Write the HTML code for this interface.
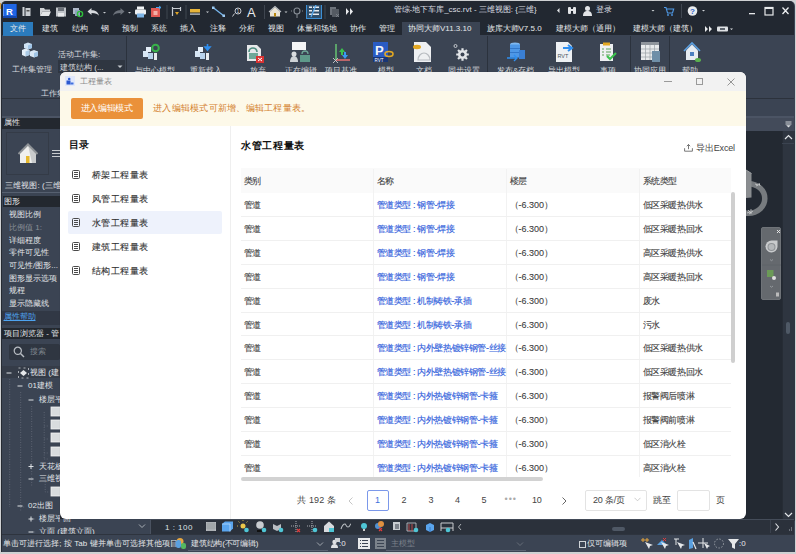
<!DOCTYPE html>
<html><head><meta charset="utf-8">
<style>
*{margin:0;padding:0;box-sizing:border-box}
html,body{width:796px;height:554px;overflow:hidden;background:#d9d9d9;font-family:"Liberation Sans",sans-serif}
.a{position:absolute}
.t{position:absolute;white-space:nowrap;line-height:1}
#win{position:absolute;left:2px;top:1px;width:792px;height:553px;background:#3b4453;border-radius:5px 5px 0 0;overflow:hidden}
.tab{position:absolute;top:22.3px;height:14px;color:#e6e8ea;font-size:8px;line-height:14px;white-space:nowrap}
.rl{position:absolute;top:65.5px;color:#d7dade;font-size:8px;line-height:9px;white-space:nowrap}
.div{position:absolute;width:1px;background:#2b323d}
/* dialog */
#dlg{position:absolute;left:60px;top:72px;width:686px;height:447px;background:#fff;border-radius:6px;overflow:hidden;box-shadow:0 0 1px rgba(0,0,0,.2)}
.tt{position:absolute;white-space:nowrap;line-height:1;font-size:9px;letter-spacing:-0.4px;color:#3f3f3f;-webkit-text-stroke:0.1px currentColor}
.th{color:#3f3f3f}
.bl{color:#3563dc;-webkit-text-stroke:0.15px #3563dc}
.lt{position:absolute;left:31.5px;white-space:nowrap;line-height:1;font-size:9px;letter-spacing:0.55px;color:#333;-webkit-text-stroke:0.12px #333}
.lico{position:absolute;left:12px;width:8px;height:9px;border:1px solid #555;border-radius:1px}
.lico i{position:absolute;left:1.5px;top:1.5px;width:3px;height:4px;border-top:1px solid #555;border-bottom:1px solid #555}
.lico i:after{content:"";position:absolute;left:0;top:1.5px;width:3px;height:1px;background:#555}
.pg{position:absolute;white-space:nowrap;line-height:1;font-size:9px;letter-spacing:-0.2px}
.pr{left:9px;color:#e2e5e8;font-size:8px}
.br{color:#e2e5e8;font-size:8px}
</style></head>
<body>
<!-- window frame -->
<div class="a" style="left:0;top:0;width:796px;height:554px;background:#cfd1d3"></div>
<div class="a" style="left:0;top:3px;width:1px;height:6px;background:#d9a040"></div>
<div class="a" style="left:1px;top:1px;width:793.5px;height:551px;background:#3b4453;border-radius:5px 5px 0 0;border-left:1px solid #262b33"></div>
<div class="a" style="left:1.5px;top:1px;width:792.5px;height:34px;background:#222831;border-radius:5px 5px 0 0"></div>

<!-- QAT -->
<div class="a" style="left:3px;top:4px;width:14px;height:14px;background:#1f66e5;box-shadow:inset -1px -2px 0 #1448b0, inset 1px 0 0 #5b93f0"></div>
<div class="t" style="left:6px;top:6.5px;color:#fff;font-size:9.5px;font-weight:bold">R</div>
<svg class="a" style="left:20px;top:5px" width="340" height="14" viewBox="0 0 340 14">
  <!-- doc icon -->
  <rect x="2.5" y="2" width="2" height="9" fill="#cfd3d8"/><rect x="5.5" y="3" width="5" height="8" fill="#c8ccd1"/><rect x="6.5" y="5" width="3" height="1.5" fill="#555"/>
  <!-- folder -->
  <path d="M20 3h4l1 1.5h5v2H22.5L20 11z" fill="#cfd2d5"/><path d="M22.5 6.5H31L29 11H20z" fill="#e3e5e7"/>
  <!-- save -->
  <rect x="36" y="2.5" width="10" height="9" fill="#bfc3c8"/><rect x="38" y="3" width="6" height="3" fill="#6b7179"/><rect x="38" y="8" width="6" height="3.5" fill="#e9ebed"/>
  <!-- sync -->
  <rect x="53" y="3" width="6" height="6" fill="#aeb8c8"/><rect x="55" y="5" width="5" height="6" fill="#8fa2bd"/><circle cx="60" cy="9" r="2.6" fill="none" stroke="#2fbf3a" stroke-width="1.4"/>
  <!-- undo -->
  <path d="M67.5 6.5l4-3.5v2.2c4 0 6.5 1.5 7.5 5.5c-1.5-2-3.5-2.8-7.5-2.8v2.2z" fill="#d8dbdf"/>
  <path d="M83 7l1.5 1.6L86 7z" fill="#c9cdd2"/>
  <!-- redo -->
  <path d="M104.5 6.5l-4-3.5v2.2c-4 0-6.5 1.5-7.5 5.5c1.5-2 3.5-2.8 7.5-2.8v2.2z" fill="#6c727b"/>
  <path d="M108 7l1.5 1.6L111 7z" fill="#c9cdd2"/>
  <!-- printer -->
  <rect x="117" y="1.5" width="7" height="3" fill="#f2f4f6"/><rect x="115" y="4.5" width="11" height="5" rx="1" fill="#eceff2"/><rect x="117" y="8.5" width="7" height="4" fill="#7db4e6"/>
  <!-- red -->
  <rect x="131" y="3" width="9" height="9" fill="#e25a54"/><rect x="133.5" y="6" width="4" height="4" fill="#f3b0a8"/><path d="M136 2.5h4.5M139 1l2 1.5-2 1.5" stroke="#4aa6ee" stroke-width="1" fill="none"/>
  <rect x="146.5" y="0" width="1" height="14" fill="#3f4650"/>
  <!-- measure -->
  <path d="M152.5 2v9M152.5 3.5h8M160.5 2v4" stroke="#c7cbd0" stroke-width="1.2" fill="none"/><path d="M155 7h4l-2 3z" fill="#e0a526"/>
  <rect x="165.5" y="0" width="1" height="14" fill="#3f4650"/>
  <!-- yellow ruler -->
  <rect x="170" y="4" width="10" height="3.5" fill="#e6b43a"/><rect x="170" y="8.5" width="10" height="1.2" fill="#cfd3d8"/>
  <path d="M186 6.5l1.5 1.6L189 6.5z" fill="#c9cdd2"/>
  <!-- diag -->
  <path d="M193 2.5L204 11" stroke="#78b7ee" stroke-width="1.3"/><rect x="192" y="1.5" width="2.5" height="2.5" fill="#9cc9f2"/><rect x="202.5" y="9.5" width="2.5" height="2.5" fill="#9cc9f2"/>
  <!-- tag -->
  <circle cx="218" cy="6" r="3" fill="none" stroke="#c8ccd1" stroke-width="1"/><path d="M214.5 8.5l-2 3" stroke="#c8ccd1" stroke-width="1"/><text x="216.6" y="8" font-size="5" fill="#c8ccd1" font-family="Liberation Sans">1</text>
  <text x="227" y="12" font-size="13" fill="#e8eaec" font-family="Liberation Sans">A</text>
  <rect x="244" y="0" width="1" height="14" fill="#3f4650"/>
  <!-- house -->
  <path d="M250 6.5l5-4.5 5 4.5v5h-10z" fill="#e9e3d4"/><path d="M249 7l6-5.5 6 5.5" stroke="#b9bdc2" stroke-width="1.2" fill="none"/><rect x="254" y="8" width="2" height="3.5" fill="#b8860b"/>
  <path d="M264.5 6.5l1.5 1.6L267.5 6.5z" fill="#c9cdd2"/>
  <!-- pin -->
  <circle cx="277" cy="6" r="3" fill="none" stroke="#878d95" stroke-width="1.1"/><path d="M277 9v4M272 6h-1M283 6h-1" stroke="#878d95" stroke-width="1"/>
  <!-- highlighted -->
  <rect x="286.5" y="-1.5" width="15" height="15" fill="#2f4f6c" stroke="#3d8fd4" stroke-width="1"/>
  <rect x="289" y="1.5" width="3" height="1.5" fill="#e9ecef"/><rect x="293" y="1.5" width="6" height="1.5" fill="#e9ecef"/><rect x="289" y="5" width="3" height="1.5" fill="#e9ecef"/><rect x="293" y="5" width="6" height="1.5" fill="#e9ecef"/><rect x="289" y="8.5" width="3" height="1.5" fill="#e9ecef"/><rect x="293" y="8.5" width="6" height="1.5" fill="#e9ecef"/><path d="M296 0L291 12" stroke="#5aaef5" stroke-width="1.2"/>
  <rect x="304.5" y="0" width="1" height="14" fill="#3f4650"/>
  <!-- grey icon -->
  <rect x="310" y="2" width="6" height="8" fill="#6d737b"/><rect x="312" y="4" width="7" height="8" fill="#555b63"/><path d="M316 9l3 3M319 9l-3 3" stroke="#80868e" stroke-width="0.8"/>
  <path d="M326 3l3 3.5-3 3.5zM330 3l3 3.5-3 3.5z" fill="#e8eaec"/>
</svg>
<div class="t" style="left:393.5px;top:6px;color:#dcdfe3;font-size:8px;letter-spacing:0px">管综-地下车库_csc.rvt - 三维视图: {三维}</div>
<svg class="a" style="left:556px;top:4px" width="240" height="14" viewBox="0 0 240 14">
  <path d="M3.5 4l-2.5 2.5 2.5 2.5z" fill="#e2e4e7"/>
  <rect x="12" y="3" width="3" height="7" rx="1" fill="#e2e4e7"/><rect x="17" y="3" width="3" height="7" rx="1" fill="#e2e4e7"/><rect x="14" y="5" width="4" height="2" fill="#e2e4e7"/>
  <circle cx="31.5" cy="4.5" r="2.5" fill="#e2e4e7"/><path d="M27 12c0-4 2-5 4.5-5s4.5 1 4.5 5z" fill="#e2e4e7"/>
  <path d="M95.5 6l1.5 1.6L98.5 6z" fill="#d0d3d7"/>
  <path d="M108 3.5h2l1.5 5.5h5l1.2-4h-7" stroke="#4f9ae8" stroke-width="1.1" fill="none"/><circle cx="112" cy="11" r="0.9" fill="#4f9ae8"/><circle cx="116" cy="11" r="0.9" fill="#4f9ae8"/>
  <rect x="125" y="0" width="1" height="14" fill="#3f4650"/>
  <circle cx="136.5" cy="7" r="4.8" fill="#e8eaed"/><text x="134" y="10" font-size="8" font-weight="bold" fill="#2d63c8" font-family="Liberation Sans">?</text>
  <path d="M146 6l1.5 1.6L149 6z" fill="#d0d3d7"/>
  <rect x="193" y="9" width="6" height="1.3" fill="#e6e8ea"/>
  <rect x="209" y="3.5" width="8" height="7.5" fill="none" stroke="#e6e8ea" stroke-width="1.2"/><rect x="209" y="3.5" width="8" height="1.5" fill="#e6e8ea"/>
  <path d="M226.5 3.5l6 6.5M232.5 3.5l-6 6.5" stroke="#eef0f2" stroke-width="1.3"/>
</svg>
<div class="t" style="left:596px;top:6px;color:#dcdfe3;font-size:8px">登录</div>

<!-- tabs -->
<div class="a" style="left:3px;top:21.5px;width:30px;height:14px;background:#2b7bbd"></div>
<div class="tab" style="left:10px">文件</div>
<div class="tab" style="left:41.5px">建筑</div>
<div class="tab" style="left:71.5px">结构</div>
<div class="tab" style="left:100.5px">钢</div>
<div class="tab" style="left:122px">预制</div>
<div class="tab" style="left:151px">系统</div>
<div class="tab" style="left:180px">插入</div>
<div class="tab" style="left:209.5px">注释</div>
<div class="tab" style="left:238.5px">分析</div>
<div class="tab" style="left:267.5px">视图</div>
<div class="tab" style="left:297px">体量和场地</div>
<div class="tab" style="left:350px">协作</div>
<div class="tab" style="left:379px">管理</div>
<div class="a" style="left:402px;top:21.5px;width:78px;height:14px;background:#3b4453"></div>
<div class="tab" style="left:408px">协同大师V11.3.10</div>
<div class="tab" style="left:486.5px">族库大师V7.5.0</div>
<div class="tab" style="left:555.5px">建模大师（通用）</div>
<div class="tab" style="left:633px">建模大师（建筑）</div>
<svg class="a" style="left:703px;top:24px" width="32" height="10" viewBox="0 0 32 10">
  <path d="M2 2l3 3-3 3zM6 2l3 3-3 3z" fill="#e8eaec"/><rect x="14" y="2.5" width="11" height="5" rx="1" fill="#dfe2e5"/><rect x="17" y="4" width="5" height="2" fill="#5c636c"/><path d="M27 4.5l1.5 1.5 1.5-1.5z" fill="#dfe2e5"/>
</svg>

<!-- ribbon -->
<svg class="a" style="left:22px;top:42px" width="18" height="17" viewBox="0 0 18 17">
  <path d="M6 0.5l4 1.5v4l-4 1.5-4-1.5v-4z" fill="#cfe3f5"/><path d="M6 3.5l4-1.5v4l-4 1.5z" fill="#9fc4e6"/>
  <path d="M3.5 6.5l4 1.5v5l-4 1.5-3.5-1.5v-5z" fill="#e3eef8"/><path d="M3.5 9.5l4-1.5v5l-4 1.5z" fill="#a9c9e6"/>
  <path d="M12 8l4 1.5v4.5l-4 1.5-4-1.5v-4.5z" fill="#d8e7f5"/><path d="M12 11l4-1.5v4.5l-4 1.5z" fill="#9fc4e6"/>
</svg>
<div class="rl" style="left:12px;top:65px">工作集管理</div>
<div class="rl" style="left:58px;top:50px">活动工作集:</div>
<div class="a" style="left:58px;top:60px;width:67px;height:13px;background:#2f3641"></div>
<div class="rl" style="left:60px;top:62.5px">建筑结构 (...</div>
<svg class="a" style="left:117px;top:65px" width="6" height="4"><path d="M0.5 0.5l2.5 2.5 2.5-2.5z" fill="#c4c8cd"/></svg>
<div class="rl" style="left:41px;top:88.5px">工作集</div>
<div class="div" style="left:126px;top:36px;height:62px"></div>
<div class="div" style="left:487px;top:36px;height:62px"></div>
<div class="div" style="left:629.5px;top:36px;height:62px"></div>
<div class="div" style="left:669px;top:36px;height:62px"></div>
<svg class="a" style="left:130px;top:39.5px" width="575" height="34" viewBox="0 0 575 34">
  <!-- 与中心模型 143-162 -->
  <g transform="translate(13,4)"><rect x="0" y="7" width="5" height="6" fill="#d7e6f4"/><rect x="5" y="9" width="5" height="6" fill="#b9d3ec"/><rect x="3" y="3" width="5" height="5" fill="#e4eef8"/><rect x="11" y="9" width="3" height="7" fill="#e8ecef"/><circle cx="12.5" cy="4" r="3.3" fill="none" stroke="#38b24a" stroke-width="2"/></g>
  <!-- 重新载入 195-213 -->
  <g transform="translate(65,4)"><rect x="0" y="7" width="5" height="6" fill="#d7e6f4"/><rect x="5" y="9" width="5" height="6" fill="#b9d3ec"/><rect x="3" y="3" width="5" height="5" fill="#e4eef8"/><rect x="11" y="9" width="3" height="7" fill="#e8ecef"/><path d="M12.5 0v5M10 3l2.5 3 2.5-3z" stroke="#2f8ff0" stroke-width="1.6" fill="#2f8ff0"/></g>
  <!-- 放弃 245-265 -->
  <g transform="translate(115,4)"><path d="M2 1h10l4 4v12H2z" fill="#e6e8ea"/><path d="M4 8a4 4 0 0 1 8 0" stroke="#4f8f80" stroke-width="1.6" fill="none"/><rect x="4" y="9" width="9" height="6" fill="#6fa898"/><rect x="11" y="12" width="8" height="7" fill="#d93232"/><path d="M13 14l4 3M17 14l-4 3" stroke="#fff" stroke-width="1"/></g>
  <!-- 正在编辑 288-310 -->
  <g transform="translate(158,2)"><rect x="4" y="0" width="14" height="8" fill="#f4f5f6"/><circle cx="6" cy="12" r="2.5" fill="#d9dcdf"/><path d="M2 20c0-4 2-6 4-6s4 2 4 6z" fill="#cfd3d7"/><path d="M14 12a3 3 0 0 1 6 0" stroke="#6fa898" stroke-width="1.3" fill="none"/><rect x="12" y="13" width="10" height="7" fill="#5e9a8a"/></g>
  <!-- 项目基准 332-352 -->
  <g transform="translate(202,2)"><path d="M4 2v16M4 18h14" stroke="#d9dcdf" stroke-width="1"/><path d="M4 2v16" stroke="#3cb14a" stroke-width="1.2"/><path d="M4 18h14" stroke="#e04848" stroke-width="1.2"/><path d="M7 10l3-4 3 4h-2v3h-2v-3z" fill="#3cc24e"/><path d="M12 10h2v3h2l-3 4-3-4h2z" fill="#3a9af0"/><path d="M1 16l5 5M6 16l-5 5" stroke="#c9ccd0" stroke-width="0.9"/></g>
  <!-- 模型 373-392 -->
  <g transform="translate(243,2)"><rect x="0" y="0" width="15" height="20" fill="#2a5cc4"/><rect x="0" y="15" width="15" height="5" fill="#183676"/><text x="2" y="13" font-size="13" font-weight="bold" fill="#f2f5fa" font-family="Liberation Sans">P</text><text x="1.5" y="19.5" font-size="4.5" fill="#fff" font-family="Liberation Sans">RVT</text><ellipse cx="16" cy="12" rx="4" ry="2.5" fill="none" stroke="#e3a823" stroke-width="1.6"/></g>
  <!-- 文档 412-432 -->
  <g transform="translate(282,2)"><path d="M2 0h12l5 5v15H2z" fill="#eef0f2"/><ellipse cx="5" cy="5" rx="4" ry="2.2" fill="#e3a823"/><path d="M6 18c0-4 3-7 6-7s6 3 6 7z" fill="none" stroke="#b8bcc1" stroke-width="1.2"/></g>
  <!-- 同步设置 455-468 -->
  <g transform="translate(323,4)"><circle cx="2.5" cy="2" r="1.5" fill="none" stroke="#cfd3d7" stroke-width="0.9"/><path d="M13.70 10.50L15.80 10.50M12.47 13.47L13.95 14.95M9.50 14.70L9.50 16.80M6.53 13.47L5.05 14.95M5.30 10.50L3.20 10.50M6.53 7.53L5.05 6.05M9.50 6.30L9.50 4.20M12.47 7.53L13.95 6.05" stroke="#e3e6e9" stroke-width="2.2"/><circle cx="9.5" cy="10.5" r="4.6" fill="#e3e6e9"/><circle cx="9.5" cy="10.5" r="2" fill="#3b4453"/></g>
  <!-- 发布&存档 507-525 -->
  <g transform="translate(377,2)"><ellipse cx="8" cy="2.5" rx="5" ry="2" fill="#7fb8f0"/><rect x="3" y="2.5" width="10" height="13" fill="#4e97e6"/><path d="M3 6.5h10M3 10.5h10" stroke="#2b6fc2" stroke-width="0.8"/><rect x="12" y="8" width="6" height="9" fill="#3a7fd4"/><path d="M0 16h10M7 13l3 3-3 3" stroke="#2f8ff0" stroke-width="1.4" fill="none"/></g>
  <!-- 导出模型 555-575 -->
  <g transform="translate(425,2)"><path d="M1 0h12l4 4v16H1z" fill="#eef1f4"/><text x="2.5" y="16" font-size="5.5" fill="#4a5563" font-family="Liberation Sans">RVT</text><path d="M8 6h8M13 3l4 3-4 3" stroke="#2f8ff0" stroke-width="2" fill="none"/></g>
  <!-- 事项 600-616 -->
  <g transform="translate(470,2)"><rect x="0" y="2" width="13" height="17" fill="#eef0f2"/><rect x="3" y="0.5" width="7" height="3" fill="#e3a823"/><path d="M2 7h2M6 7h5M2 10h2M6 10h5M2 13h2M6 13h4" stroke="#5fa05a" stroke-width="1"/><path d="M7 14l3 3 6-6" stroke="#3cc24e" stroke-width="2.2" fill="none"/></g>
  <!-- 协同应用 641-660 -->
  <g transform="translate(511,2)"><rect x="0" y="0" width="18" height="18" fill="#e8eaec"/><rect x="0" y="0" width="18" height="3" fill="#8f959c"/><path d="M0 7h18M0 11h18M0 15h18M4.5 3v15M9 3v15M13.5 3v15" stroke="#9aa0a6" stroke-width="0.7"/><rect x="11" y="9" width="8" height="11" fill="#6f8fa8"/></g>
  <!-- 帮助 683-700 -->
  <g transform="translate(553,2)"><path d="M1 9l8-8 8 8" stroke="#5a9fe0" stroke-width="1.6" fill="none"/><path d="M3 8.5l6-6 6 6V18H3z" fill="#e6ecf2"/><rect x="7" y="10" width="4" height="4" fill="#4a7fc0"/><ellipse cx="15" cy="18" rx="3" ry="2" fill="#5bb04e"/></g>
</svg>
<div class="rl" style="left:135px">与中心模型</div>
<div class="rl" style="left:190px">重新载入</div>
<div class="rl" style="left:249.5px">放弃</div>
<div class="rl" style="left:285px">正在编辑</div>
<div class="rl" style="left:325px">项目基准</div>
<div class="rl" style="left:377.5px">模型</div>
<div class="rl" style="left:416px">文档</div>
<div class="rl" style="left:448px">同步设置</div>
<div class="rl" style="left:497px">发布&amp;存档</div>
<div class="rl" style="left:548px">导出模型</div>
<div class="rl" style="left:600px">事项</div>
<div class="rl" style="left:634px">协同应用</div>
<div class="rl" style="left:682px">帮助</div>
<div class="a" style="left:1.5px;top:97.5px;width:792.5px;height:1px;background:#2c323c"></div>

<!-- options bar -->
<div class="a" style="left:1.5px;top:115.5px;width:792.5px;height:2px;background:#4b5464"></div>

<!-- properties panel -->
<div class="a" style="left:1.5px;top:117.5px;width:58.5px;height:11px;background:#23282f"></div>
<div class="t" style="left:4px;top:119px;color:#e2e5e8;font-size:8px">属性</div>
<div class="a" style="left:5.5px;top:131.5px;width:43.5px;height:43px;border:1px solid #343b47;background:#3b4453"></div>
<svg class="a" style="left:18px;top:142.5px" width="20" height="22" viewBox="0 0 20 22">
  <path d="M2 10L10 2l8 8v10H2z" fill="#f0f0ee"/><path d="M10 2l8 8v10h-4z" fill="#c9cbcc"/><path d="M0.5 11L10 1.5 19.5 11" stroke="#8f9397" stroke-width="2" fill="none"/><rect x="8" y="13" width="3.5" height="7" fill="#e6b82e"/>
</svg>
<div class="a" style="left:52px;top:150px;width:8px;height:1px;background:#c8ccd0"></div>
<div class="a" style="left:52px;top:153px;width:8px;height:1px;background:#c8ccd0"></div>
<div class="a" style="left:52px;top:156px;width:8px;height:1px;background:#c8ccd0"></div>
<div class="t" style="left:5px;top:181.5px;color:#e2e5e8;font-size:8px;letter-spacing:0.1px">三维视图: (三维</div>
<div class="a" style="left:2px;top:191.5px;width:58px;height:1.5px;background:#566070"></div>
<div class="a" style="left:3px;top:196px;width:57px;height:11px;background:#23282f"></div>
<div class="t" style="left:4px;top:197.5px;color:#e2e5e8;font-size:8px">图形</div>
<div class="t pr" style="top:211px">视图比例</div>
<div class="t pr" style="top:223.5px;color:#8a9098">比例值 1:</div>
<div class="t pr" style="top:236.5px">详细程度</div>
<div class="t pr" style="top:249px">零件可见性</div>
<div class="t pr" style="top:261.5px">可见性/图形...</div>
<div class="t pr" style="top:274.5px">图形显示选项</div>
<div class="t pr" style="top:287px">规程</div>
<div class="t pr" style="top:299.5px">显示隐藏线</div>
<div class="a" style="left:2px;top:311px;width:58px;height:14px;background:#313845"></div>
<div class="t" style="left:3.5px;top:313px;color:#4ea3ef;font-size:8px;text-decoration:underline">属性帮助</div>

<!-- project browser -->
<div class="a" style="left:2px;top:328px;width:58px;height:11.3px;background:#23282f"></div>
<div class="t" style="left:4px;top:329.5px;color:#e2e5e8;font-size:8px">项目浏览器 - 管</div>
<div class="a" style="left:9px;top:344px;width:51px;height:15.5px;background:#2f3641;border-radius:2px"></div>
<svg class="a" style="left:13px;top:346px" width="12" height="12" viewBox="0 0 12 12"><circle cx="4.8" cy="4.8" r="3.6" fill="none" stroke="#b9bec4" stroke-width="1.2"/><path d="M7.5 7.5L11 11" stroke="#b9bec4" stroke-width="1.4"/></svg>
<div class="t" style="left:30px;top:347.5px;color:#7d848c;font-size:8px">搜索</div>
<div class="a" style="left:1.5px;top:366px;width:58.5px;height:12px;background:#353c48"></div>
<svg class="a" style="left:1.5px;top:366.5px" width="150" height="170" viewBox="0 0 150 170">
  <g stroke="#646c79" stroke-width="0.8" stroke-dasharray="1,1.5" fill="none" transform="translate(-1.8,0)">
    <path d="M9.5 12v128M20.5 25v120M31.5 39v70M31.5 110v10M44 45v46M44 92h5M44 59h5M44 72h5M44 86h5M45 112v13h4M20.5 140h5M31.5 152h5M31.5 165h5"/>
  </g>
  <path d="M4.5 6h5M15.5 19h5M26.5 33h5M26.5 112h5M15.5 139h5M26.5 165h5" stroke="#dfe2e6" stroke-width="1"/>
  <path d="M29 97v5M26.5 99.5h5M29 149.5v5M26.5 152h5" stroke="#dfe2e6" stroke-width="1"/>
  <rect x="16.5" y="1" width="10" height="10" fill="none" stroke="#c9cdd2" stroke-width="0.8" stroke-dasharray="2,3"/><path d="M18 6l3.5-3 3.5 3-3.5 3z" fill="#e6e8ea"/>
  <rect x="49" y="40" width="10" height="9" fill="#d9dcde" stroke="#f4f4f4" stroke-width="0.8"/>
  <rect x="49" y="53" width="10" height="9" fill="#d9dcde" stroke="#f4f4f4" stroke-width="0.8"/>
  <rect x="49" y="66" width="10" height="9" fill="#d9dcde" stroke="#f4f4f4" stroke-width="0.8"/>
  <rect x="49" y="80" width="10" height="9" fill="#d9dcde" stroke="#f4f4f4" stroke-width="0.8"/>
  <rect x="49" y="120" width="10" height="9" fill="#d9dcde" stroke="#f4f4f4" stroke-width="0.8"/>
</svg>
<div class="t br" style="left:30px;top:369px">视图 (建</div>
<div class="t br" style="left:28px;top:382px">01建模</div>
<div class="t br" style="left:39px;top:396px">楼层平</div>
<div class="t br" style="left:39px;top:462.5px">天花板</div>
<div class="t br" style="left:39px;top:474.5px">三维视</div>
<div class="t br" style="left:28px;top:502px">02出图</div>
<div class="t br" style="left:39px;top:515px">楼层平面</div>
<div class="t br" style="left:39px;top:527.5px">立面 (建筑立面)</div>
<div class="a" style="left:137px;top:519px;width:11px;height:15px;background:#3b4453"></div>
<svg class="a" style="left:138px;top:523px" width="8" height="6"><path d="M1 1.5l3 3 3-3" stroke="#aab0b7" stroke-width="1" fill="none"/></svg>

<!-- view area -->
<div class="a" style="left:60px;top:117.5px;width:734px;height:13.5px;background:#434b5a"></div>
<svg class="a" style="left:785px;top:121px" width="7" height="7" viewBox="0 0 7 7"><path d="M0.5 1h6M0.5 3h6" stroke="#dfe2e5" stroke-width="0.9"/><path d="M1.2 4.3h4.6L3.5 6.5z" fill="#dfe2e5"/></svg>
<div class="a" style="left:60px;top:131px;width:722px;height:388px;background:#232932"></div>
<div class="a" style="left:781.5px;top:131px;width:13px;height:390px;background:#2e3540;border-left:1px solid #262c35"></div>
<svg class="a" style="left:784px;top:134px" width="9" height="7"><path d="M1 5l3.5-3.5L8 5" stroke="#e3e6e9" stroke-width="1.2" fill="none"/></svg>
<div class="a" style="left:782px;top:142.5px;width:12px;height:1px;background:#3b4350"></div>
<div class="a" style="left:785.8px;top:321.5px;width:4.5px;height:12px;background:#4f5966;border-radius:2px"></div>
<svg class="a" style="left:784px;top:511px" width="9" height="7"><path d="M1 2l3.5 3.5L8 2" stroke="#e3e6e9" stroke-width="1.2" fill="none"/></svg>
<!-- viewcube ring -->
<svg class="a" style="left:746px;top:160px" width="36" height="60" viewBox="0 0 36 60">
  <ellipse cx="2.5" cy="38.5" rx="16.3" ry="14.8" fill="none" stroke="#777b7f" stroke-width="5.5"/>
  <path d="M0 10l5.5 3.5v24l-5.5 0.5z" fill="#8a8d90"/><path d="M0 10l5.5 3.5" stroke="#a0a3a6" stroke-width="1"/>
  <path d="M9 24l3 1M10 26l4-2M13 23l1 3" stroke="#d5d7d9" stroke-width="0.7"/>
  <path d="M2 50l3 3M3 54l4-3M5 49v5M1 53l3-1" stroke="#d5d7d9" stroke-width="0.7"/>
</svg>
<!-- nav bar -->
<div class="a" style="left:761px;top:227px;width:20px;height:73px;background:#65696e;border-radius:2px;border:1px solid #6f7378"></div>
<svg class="a" style="left:761px;top:227px" width="21" height="73" viewBox="0 0 21 73">
  <path d="M16 3l3 3M19 3l-3 3" stroke="#eee" stroke-width="0.9"/>
  <path d="M10.5 13.5h6v6.5a6 6 0 1 1-6-6.5z" fill="#c9cbcd"/><circle cx="10.5" cy="20" r="4" fill="#8d9195"/><circle cx="10.5" cy="20" r="3" fill="#b5b8bb"/>
  <path d="M9 32.5l1.5 1.2 1.5-1.2" stroke="#a0a4a8" stroke-width="0.8" fill="none"/>
  <path d="M1 38h19" stroke="#5d6267" stroke-width="0.8"/>
  <rect x="6" y="43" width="6.5" height="7" fill="#6b9a57"/><circle cx="13" cy="51" r="2" fill="#e0e0e0"/>
  <path d="M9 59l1.5 1.2 1.5-1.2" stroke="#a0a4a8" stroke-width="0.8" fill="none"/>
  <rect x="15" y="65.5" width="3" height="4" fill="#bbb"/>
</svg>

<!-- view control bar -->
<div class="a" style="left:150px;top:519px;width:315px;height:16px;background:#2b313b;border-top:1px solid #444c59;border-left:1px solid #4a5260"></div>
<div class="t" style="left:165px;top:523.5px;color:#dfe2e5;font-size:8px;letter-spacing:0.5px">1 : 100</div>
<svg class="a" style="left:200px;top:520px" width="265" height="14" viewBox="0 0 265 14">
  <rect x="6" y="2" width="10" height="9" fill="#b9bcc0"/><path d="M6 4h10M6 6h10M6 8h10M8 2v9M10 2v9M12 2v9M14 2v9" stroke="#8c9094" stroke-width="0.6"/>
  <path d="M22 4l3-2.5h8v7l-3 3h-8z" fill="#5aa5ee"/><path d="M22 4h8v7.5" stroke="#b7dafb" stroke-width="0.8" fill="none"/>
  <circle cx="43" cy="6" r="2.5" fill="#ebc84a"/><path d="M38 6h-1M43 1v-1M39.5 2.5l-1-1M46.5 2.5l1-1" stroke="#ebc84a" stroke-width="0.8"/><circle cx="46.5" cy="10" r="2.3" fill="#4fc6d6"/>
  <circle cx="60" cy="5" r="3.8" fill="#c8ccd0"/><rect x="57" y="10" width="5" height="2" fill="#111"/><circle cx="64" cy="10" r="2.3" fill="#4fc6d6"/>
  <path d="M73 4l4 2v5l-4-2zM77 6l4-2v5l-4 2z" fill="#b9bdc2"/><circle cx="81" cy="10" r="2.3" fill="#4fc6d6"/>
  <path d="M96 1v11M91 6h10" stroke="#c9ccd0" stroke-width="0.8" stroke-dasharray="1,1"/><path d="M97 9l3 3M100 9l-3 3" stroke="#e03c3c" stroke-width="1.1"/>
  <path d="M112 1v11M107 6h10" stroke="#c9ccd0" stroke-width="0.8" stroke-dasharray="1,1"/><circle cx="115" cy="10" r="2.3" fill="#4fc6d6"/>
  <path d="M124 6l5-4.5 5 4.5v6h-10z" fill="#d8dbde"/><rect x="129" y="8" width="5" height="4" fill="#4fc6d6"/>
  <path d="M141 9c1-3 3-5 4-5s1 3 3 3 2-3 3-3" stroke="#b9bdc2" stroke-width="1.1" fill="none"/>
  <circle cx="164" cy="6" r="3" fill="#4fc6d6"/><rect x="163" y="9" width="2" height="2" fill="#ccc"/>
  <circle cx="178" cy="6" r="3" fill="#5090d0"/><circle cx="181" cy="4" r="3" fill="#e09040"/><path d="M179 8l3 3M182 8l-3 3" stroke="#e03c3c" stroke-width="1.1"/>
  <rect x="193" y="2" width="7" height="8" fill="#c9ccd0"/><rect x="195" y="4" width="4" height="5" fill="#7d828a"/>
  <path d="M207 3h9v8h-9z" stroke="#c9ccd0" stroke-width="0.8" fill="none"/><path d="M209 4v7M212 4v7" stroke="#e05050" stroke-width="0.8"/><circle cx="216" cy="10" r="2.3" fill="#4fc6d6"/>
  <path d="M226 5l4-2 4 2v5l-4 2-4-2z" fill="#5aa5ee"/><path d="M230 7v5" stroke="#2c6fb8" stroke-width="0.8"/>
  <path d="M241 3h12M241 3v8M253 3v8M241 8h12" stroke="#c9ccd0" stroke-width="1" fill="none"/><circle cx="248" cy="10" r="2.3" fill="#4fc6d6"/>
  <path d="M261 4l-2.5 3 2.5 3" stroke="#b9bdc2" stroke-width="0.9" fill="none"/>
</svg>
<div class="a" style="left:465px;top:519px;width:329px;height:14.5px;background:#2b313b;border-top:1px solid #444c59"></div>
<div class="a" style="left:612px;top:527px;width:13px;height:3.5px;background:#4f5865;border-radius:2px"></div>
<div class="a" style="left:770px;top:520px;width:1px;height:13px;background:#3a414d"></div>
<svg class="a" style="left:773px;top:522px" width="21" height="10"><path d="M2.5 1.5l3 3.5-3 3.5" stroke="#dfe2e5" stroke-width="1.1" fill="none"/><path d="M16 8h1M18 8h1M18 6h1" stroke="#aab0b7" stroke-width="1"/></svg>

<!-- status bar -->
<div class="a" style="left:1.5px;top:534px;width:792.5px;height:17.5px;background:#3b4453;border-top:1px solid #2e343e"></div>
<div class="t" style="left:3px;top:540px;color:#e6e8ea;font-size:8px;letter-spacing:0.05px">单击可进行选择; 按 Tab 键并单击可选择其他项目</div>
<svg class="a" style="left:175px;top:537px" width="12" height="13" viewBox="0 0 12 13"><circle cx="5" cy="4.5" r="3.5" fill="#e6a640"/><rect x="1" y="3" width="5" height="8" rx="2" fill="#5aa0e0"/><rect x="6" y="6" width="5" height="6" rx="2" fill="#55b860"/></svg>
<div class="a" style="left:188px;top:536px;width:140px;height:15px;background:#3b4453;border-bottom:1px solid #5a6373"></div>
<div class="t" style="left:191px;top:540px;color:#e6e8ea;font-size:8px;letter-spacing:-0.2px">建筑结构(不可编辑)</div>
<svg class="a" style="left:316px;top:541px" width="8" height="6"><path d="M1 1.5l3 3 3-3" stroke="#aab0b7" stroke-width="0.9" fill="none"/></svg>
<svg class="a" style="left:330px;top:537px" width="16" height="13" viewBox="0 0 16 13"><circle cx="4.5" cy="5" r="2.2" fill="#e0e2e5"/><path d="M1 11c0-3 1.5-4 3.5-4s3.5 1 3.5 4z" fill="#e0e2e5"/><rect x="5" y="1" width="5" height="4" fill="#cfd2d6"/></svg>
<div class="t" style="left:339px;top:540px;color:#e6e8ea;font-size:8px">:0</div>
<svg class="a" style="left:357px;top:537px" width="32" height="13" viewBox="0 0 32 13"><rect x="1" y="1" width="12" height="11" fill="#e8eaec"/><path d="M3 3.5h1M5 3.5h6M3 6.5h1M5 6.5h6M3 9.5h1M5 9.5h6" stroke="#3b4453" stroke-width="1"/><rect x="18" y="1" width="11" height="11" fill="#7b828b"/><path d="M20 3.5h7M20 6.5h7M20 9.5h7" stroke="#3b4453" stroke-width="1"/></svg>
<div class="a" style="left:386px;top:536px;width:140px;height:15px;border-bottom:1px solid #5a6373"></div>
<div class="t" style="left:391px;top:540px;color:#7b828b;font-size:8px">主模型</div>
<svg class="a" style="left:516px;top:541px" width="8" height="6"><path d="M1 1.5l3 3 3-3" stroke="#6b727b" stroke-width="0.9" fill="none"/></svg>
<div class="a" style="left:579px;top:541px;width:7px;height:7px;border:1px solid #cfd3d7"></div>
<div class="t" style="left:587px;top:540px;color:#e6e8ea;font-size:8px">仅可编辑项</div>
<svg class="a" style="left:640px;top:537px" width="70" height="13" viewBox="0 0 70 13">
  <path d="M1 3h8M3 1v4M7 1v4" stroke="#e6a640" stroke-width="1"/><path d="M5 5l4 7 1-3 3-1z" fill="#e6e8ea"/>
  <path d="M17 8l5-5 5 5z" fill="#5aa0e0"/><path d="M21 5l4 7 1-3 3-1z" fill="#e6e8ea"/><path d="M23 1l3 3M26 1l-3 3" stroke="#e03c3c" stroke-width="1"/>
  <path d="M34 2h5M36 2v6" stroke="#e6e8ea" stroke-width="1"/><path d="M37 5l4 7 1-3 3-1z" fill="#e6e8ea"/>
  <path d="M49 3l4-2v10l-4 1z" fill="#5aa0e0"/><path d="M53 5l3 7" stroke="#e6e8ea" stroke-width="1.2"/>
  <path d="M63 1v10M58 6h10" stroke="#e6e8ea" stroke-width="1"/><path d="M64 6l3 6 1-2 2-1z" fill="#e6e8ea"/>
</svg>
<svg class="a" style="left:713px;top:537px" width="40" height="13" viewBox="0 0 40 13"><circle cx="6" cy="6.5" r="4.5" fill="none" stroke="#9aa0a7" stroke-width="1" stroke-dasharray="1.5,1.5"/><path d="M15 2h11l-4 5v5l-3-1.5V7z" fill="#e6e8ea"/></svg>
<div class="t" style="left:739px;top:540px;color:#e6e8ea;font-size:8px">:0</div>

<div id="dlg">
  <div class="a" style="left:0;top:0;width:686px;height:19px;background:#f2f2f2"></div>
  <div class="a" style="left:5px;top:4px;width:10px;height:10px;background:#dfe7fb"></div>
  <svg class="a" style="left:5px;top:4px" width="10" height="10" viewBox="0 0 10 10"><circle cx="4.2" cy="3" r="1.3" fill="#2f5fd6"/><rect x="1.5" y="4.5" width="4" height="4" fill="#2a58d0"/><rect x="5.5" y="6.5" width="3" height="2" fill="#3f6fe0"/></svg>
  <div class="t" style="left:19.5px;top:6px;font-size:8px;letter-spacing:0.1px;color:#8a8a8a">工程量表</div>
  <!-- window controls -->
  <div class="a" style="left:604px;top:9px;width:8px;height:1px;background:#9a9a9a"></div>
  <div class="a" style="left:636px;top:6px;width:7px;height:7px;border:1px solid #9a9a9a"></div>
  <svg class="a" style="left:667px;top:6px" width="8" height="8" viewBox="0 0 8 8"><path d="M0.5 0.5L7.5 7.5M7.5 0.5L0.5 7.5" stroke="#8a8a8a" stroke-width="0.9"/></svg>

  <div class="a" style="left:0;top:19px;width:686px;height:35px;background:#fdf9e9"></div>
  <div class="a" style="left:11px;top:26px;width:71.5px;height:21px;background:#ea913a;border-radius:2px"></div>
  <div class="t" style="left:20.5px;top:32px;font-size:9px;letter-spacing:-0.3px;color:#fff">进入编辑模式</div>
  <div class="t" style="left:93px;top:32px;font-size:9px;letter-spacing:0.25px;color:#d4812f">进入编辑模式可新增、编辑工程量表。</div>

  <div class="a" style="left:170px;top:54px;width:1px;height:393px;background:#efefef"></div>
  <div class="t" style="left:9px;top:68px;font-size:10px;font-weight:bold;color:#111;letter-spacing:0.3px">目录</div>
  <div class="a" style="left:8px;top:138.5px;width:154px;height:23px;background:#eef2fc;border-radius:2px"></div>
  <svg class="a" style="left:12px;top:98px" width="9" height="10" viewBox="0 0 9 10"><rect x="0.5" y="0.5" width="7" height="8" rx="1" fill="none" stroke="#4a4a4a" stroke-width="1"/><path d="M2 2.5h4M2 4.5h4M2 6.5h4" stroke="#4a4a4a" stroke-width="1"/></svg>
  <svg class="a" style="left:12px;top:122px" width="9" height="10" viewBox="0 0 9 10"><rect x="0.5" y="0.5" width="7" height="8" rx="1" fill="none" stroke="#4a4a4a" stroke-width="1"/><path d="M2 2.5h4M2 4.5h4M2 6.5h4" stroke="#4a4a4a" stroke-width="1"/></svg>
  <svg class="a" style="left:12px;top:146px" width="9" height="10" viewBox="0 0 9 10"><rect x="0.5" y="0.5" width="7" height="8" rx="1" fill="none" stroke="#4a4a4a" stroke-width="1"/><path d="M2 2.5h4M2 4.5h4M2 6.5h4" stroke="#4a4a4a" stroke-width="1"/></svg>
  <svg class="a" style="left:12px;top:170px" width="9" height="10" viewBox="0 0 9 10"><rect x="0.5" y="0.5" width="7" height="8" rx="1" fill="none" stroke="#4a4a4a" stroke-width="1"/><path d="M2 2.5h4M2 4.5h4M2 6.5h4" stroke="#4a4a4a" stroke-width="1"/></svg>
  <svg class="a" style="left:12px;top:194px" width="9" height="10" viewBox="0 0 9 10"><rect x="0.5" y="0.5" width="7" height="8" rx="1" fill="none" stroke="#4a4a4a" stroke-width="1"/><path d="M2 2.5h4M2 4.5h4M2 6.5h4" stroke="#4a4a4a" stroke-width="1"/></svg>
  <div class="lt" style="top:98.5px">桥架工程量表</div>
  <div class="lt" style="top:122.5px">风管工程量表</div>
  <div class="lt" style="top:146.5px">水管工程量表</div>
  <div class="lt" style="top:170.5px">建筑工程量表</div>
  <div class="lt" style="top:194.5px">结构工程量表</div>

  <div class="t" style="left:181px;top:68.5px;font-size:10px;font-weight:bold;color:#111;letter-spacing:0.7px">水管工程量表</div>
  <svg class="a" style="left:624px;top:71.5px" width="9" height="8" viewBox="0 0 9 8"><path d="M4.5 0.5V5.2M2.8 2.2L4.5 0.5L6.2 2.2M0.6 4.2V7.2H8.4V4.2" fill="none" stroke="#555" stroke-width="0.8"/></svg>
  <div class="t" style="left:636px;top:72px;font-size:9px;letter-spacing:-0.15px;color:#444">导出Excel</div>

  <!-- scrollbars -->
  <div class="a" style="left:671px;top:120px;width:4px;height:171px;background:#cfcfcf;border-radius:2px"></div>
  <div class="a" style="left:181px;top:405px;width:302px;height:4px;background:#d2d2d2;border-radius:2px"></div>

  <!-- pagination -->
  <div class="pg" style="left:237px;top:424px;color:#444;letter-spacing:0.2px">共 192 条</div>
  <svg class="a" style="left:288px;top:424.5px" width="6" height="8" viewBox="0 0 6 8"><path d="M4.5 0.5L1 4L4.5 7.5" fill="none" stroke="#c0c0c0" stroke-width="0.9"/></svg>
  <div class="a" style="left:307px;top:417.5px;width:22px;height:21px;border:1px solid #7b98ea;border-radius:2px"></div>
  <div class="pg" style="left:315px;top:424px;color:#3d6fdc">1</div>
  <div class="pg" style="left:341.5px;top:424px;color:#444">2</div>
  <div class="pg" style="left:368.5px;top:424px;color:#444">3</div>
  <div class="pg" style="left:395px;top:424px;color:#444">4</div>
  <div class="pg" style="left:421.5px;top:424px;color:#444">5</div>
  <div class="pg" style="left:444.5px;top:423px;color:#aaa;letter-spacing:1px">•••</div>
  <div class="pg" style="left:472px;top:424px;color:#444">10</div>
  <svg class="a" style="left:501px;top:424.5px" width="6" height="8" viewBox="0 0 6 8"><path d="M1.5 0.5L5 4L1.5 7.5" fill="none" stroke="#555" stroke-width="0.9"/></svg>
  <div class="a" style="left:525px;top:417.5px;width:62px;height:21px;border:1px solid #e3e3e3;border-radius:2px"></div>
  <div class="pg" style="left:533px;top:424px;color:#444">20 条/页</div>
  <svg class="a" style="left:574px;top:425px" width="7" height="5" viewBox="0 0 7 5"><path d="M0.5 0.8L3.5 3.8L6.5 0.8" fill="none" stroke="#c0c0c0" stroke-width="0.8"/></svg>
  <div class="pg" style="left:593px;top:424px;color:#444">跳至</div>
  <div class="a" style="left:617px;top:417.5px;width:33px;height:21px;border:1px solid #e3e3e3;border-radius:2px"></div>
  <div class="pg" style="left:655.5px;top:424px;color:#444">页</div>

<div class="a" style="left:181px;top:96px;width:490px;height:25px;background:#fafafa"></div>
<div class="a" style="left:313px;top:97px;width:1px;height:307.79999999999995px;background:#f2f2f2"></div>
<div class="a" style="left:446px;top:97px;width:1px;height:307.79999999999995px;background:#f2f2f2"></div>
<div class="a" style="left:579px;top:97px;width:1px;height:307.79999999999995px;background:#f2f2f2"></div>
<div class="tt th" style="left:183.5px;top:104.5px">类别</div>
<div class="tt th" style="left:316.5px;top:104.5px">名称</div>
<div class="tt th" style="left:449.5px;top:104.5px">楼层</div>
<div class="tt th" style="left:582.5px;top:104.5px">系统类型</div>
<div class="a" style="left:181px;top:143.9px;width:490px;height:1px;background:#f0f0f0"></div>
<div class="tt" style="left:183.5px;top:129.0px">管道</div>
<div class="tt bl" style="left:316.5px;top:129.0px">管道类型 : 钢管-焊接</div>
<div class="tt" style="left:449.5px;top:129.0px;letter-spacing:0px">（-6.300）</div>
<div class="tt" style="left:582.5px;top:129.0px">低区采暖热供水</div>
<div class="a" style="left:181px;top:167.8px;width:490px;height:1px;background:#f0f0f0"></div>
<div class="tt" style="left:183.5px;top:152.9px">管道</div>
<div class="tt bl" style="left:316.5px;top:152.9px">管道类型 : 钢管-焊接</div>
<div class="tt" style="left:449.5px;top:152.9px;letter-spacing:0px">（-6.300）</div>
<div class="tt" style="left:582.5px;top:152.9px">低区采暖热回水</div>
<div class="a" style="left:181px;top:191.70000000000002px;width:490px;height:1px;background:#f0f0f0"></div>
<div class="tt" style="left:183.5px;top:176.8px">管道</div>
<div class="tt bl" style="left:316.5px;top:176.8px">管道类型 : 钢管-焊接</div>
<div class="tt" style="left:449.5px;top:176.8px;letter-spacing:0px">（-6.300）</div>
<div class="tt" style="left:582.5px;top:176.8px">高区采暖热供水</div>
<div class="a" style="left:181px;top:215.6px;width:490px;height:1px;background:#f0f0f0"></div>
<div class="tt" style="left:183.5px;top:200.7px">管道</div>
<div class="tt bl" style="left:316.5px;top:200.7px">管道类型 : 钢管-焊接</div>
<div class="tt" style="left:449.5px;top:200.7px;letter-spacing:0px">（-6.300）</div>
<div class="tt" style="left:582.5px;top:200.7px">高区采暖热回水</div>
<div class="a" style="left:181px;top:239.5px;width:490px;height:1px;background:#f0f0f0"></div>
<div class="tt" style="left:183.5px;top:224.6px">管道</div>
<div class="tt bl" style="left:316.5px;top:224.6px">管道类型 : 机制铸铁-承插</div>
<div class="tt" style="left:449.5px;top:224.6px;letter-spacing:0px">（-6.300）</div>
<div class="tt" style="left:582.5px;top:224.6px">废水</div>
<div class="a" style="left:181px;top:263.4px;width:490px;height:1px;background:#f0f0f0"></div>
<div class="tt" style="left:183.5px;top:248.5px">管道</div>
<div class="tt bl" style="left:316.5px;top:248.5px">管道类型 : 机制铸铁-承插</div>
<div class="tt" style="left:449.5px;top:248.5px;letter-spacing:0px">（-6.300）</div>
<div class="tt" style="left:582.5px;top:248.5px">污水</div>
<div class="a" style="left:181px;top:287.29999999999995px;width:490px;height:1px;background:#f0f0f0"></div>
<div class="tt" style="left:183.5px;top:272.4px">管道</div>
<div class="tt bl" style="left:316.5px;top:272.4px">管道类型 : 内外壁热镀锌钢管-丝接</div>
<div class="tt" style="left:449.5px;top:272.4px;letter-spacing:0px">（-6.300）</div>
<div class="tt" style="left:582.5px;top:272.4px">低区采暖热供水</div>
<div class="a" style="left:181px;top:311.19999999999993px;width:490px;height:1px;background:#f0f0f0"></div>
<div class="tt" style="left:183.5px;top:296.29999999999995px">管道</div>
<div class="tt bl" style="left:316.5px;top:296.29999999999995px">管道类型 : 内外壁热镀锌钢管-丝接</div>
<div class="tt" style="left:449.5px;top:296.29999999999995px;letter-spacing:0px">（-6.300）</div>
<div class="tt" style="left:582.5px;top:296.29999999999995px">低区采暖热回水</div>
<div class="a" style="left:181px;top:335.09999999999997px;width:490px;height:1px;background:#f0f0f0"></div>
<div class="tt" style="left:183.5px;top:320.2px">管道</div>
<div class="tt bl" style="left:316.5px;top:320.2px">管道类型 : 内外热镀锌钢管-卡箍</div>
<div class="tt" style="left:449.5px;top:320.2px;letter-spacing:0px">（-6.300）</div>
<div class="tt" style="left:582.5px;top:320.2px">报警阀后喷淋</div>
<div class="a" style="left:181px;top:359.0px;width:490px;height:1px;background:#f0f0f0"></div>
<div class="tt" style="left:183.5px;top:344.1px">管道</div>
<div class="tt bl" style="left:316.5px;top:344.1px">管道类型 : 内外热镀锌钢管-卡箍</div>
<div class="tt" style="left:449.5px;top:344.1px;letter-spacing:0px">（-6.300）</div>
<div class="tt" style="left:582.5px;top:344.1px">报警阀前喷淋</div>
<div class="a" style="left:181px;top:382.9px;width:490px;height:1px;background:#f0f0f0"></div>
<div class="tt" style="left:183.5px;top:368.0px">管道</div>
<div class="tt bl" style="left:316.5px;top:368.0px">管道类型 : 内外热镀锌钢管-卡箍</div>
<div class="tt" style="left:449.5px;top:368.0px;letter-spacing:0px">（-6.300）</div>
<div class="tt" style="left:582.5px;top:368.0px">低区消火栓</div>
<div class="tt" style="left:183.5px;top:391.9px">管道</div>
<div class="tt bl" style="left:316.5px;top:391.9px">管道类型 : 内外热镀锌钢管-卡箍</div>
<div class="tt" style="left:449.5px;top:391.9px;letter-spacing:0px">（-6.300）</div>
<div class="tt" style="left:582.5px;top:391.9px">高区消火栓</div>
</div>
</body></html>
